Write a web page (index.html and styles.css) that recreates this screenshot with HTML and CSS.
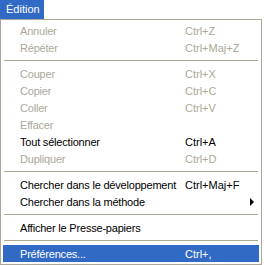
FILE: index.html
```html
<!DOCTYPE html>
<html lang="fr">
<head>
    <meta charset="UTF-8">
    <title>Édition</title>
    <link rel="stylesheet" href="styles.css">
</head>
<body>
    <div class="menu-title">Édition</div>

    <div class="menu">
        <div class="item off"><span class="label">Annuler</span><span class="key">Ctrl+Z</span></div>
        <div class="item off"><span class="label">Répéter</span><span class="key">Ctrl+Maj+Z</span></div>
        <div class="sep"></div>
        <div class="item off"><span class="label">Couper</span><span class="key">Ctrl+X</span></div>
        <div class="item off"><span class="label">Copier</span><span class="key">Ctrl+C</span></div>
        <div class="item off"><span class="label">Coller</span><span class="key">Ctrl+V</span></div>
        <div class="item off"><span class="label">Effacer</span><span class="key"></span></div>
        <div class="item"><span class="label">Tout sélectionner</span><span class="key">Ctrl+A</span></div>
        <div class="item off"><span class="label">Dupliquer</span><span class="key">Ctrl+D</span></div>
        <div class="sep"></div>
        <div class="item"><span class="label">Chercher dans le développement</span><span class="key">Ctrl+Maj+F</span></div>
        <div class="item"><span class="label">Chercher dans la méthode</span><span class="key"></span><span class="arrow"></span></div>
        <div class="sep"></div>
        <div class="item"><span class="label">Afficher le Presse-papiers</span><span class="key"></span></div>
        <div class="sep"></div>
        <div class="item active"><span class="label">Préférences...</span><span class="key">Ctrl+,</span></div>
    </div>
</body>
</html>
```

FILE: styles.css
```css
* {
    margin: 0;
    padding: 0;
    box-sizing: border-box;
}
body {
    background: #ffffff;
    font-family: "Liberation Sans", Arial, sans-serif;
    font-size: 11px;
    color: #000000;
}
.menu-title {
    width: 44px;
    height: 19px;
    line-height: 19px;
    padding-left: 6px;
    background: #316ac5;
    color: #ffffff;
}
.menu {
    width: 262px;
    border: 1px solid #aca899;
    padding: 2px;
    background: #ffffff;
}
.item {
    display: flex;
    align-items: center;
    height: 17px;
}
.label {
    width: 182px;
    padding-left: 17px;
    white-space: nowrap;
    letter-spacing: -0.2px;
}
.key {
    flex: 1;
    white-space: nowrap;
}
.off {
    color: #aca899;
}
.active {
    background: #316ac5;
    color: #ffffff;
}
.arrow {
    width: 0;
    height: 0;
    margin-right: 5px;
    border-top: 4px solid transparent;
    border-bottom: 4px solid transparent;
    border-left: 4px solid #000000;
}
.sep {
    height: 9px;
    padding: 4px 1px 4px 1px;
}
.sep::before {
    content: "";
    display: block;
    height: 1px;
    background: #aca899;
}
```
